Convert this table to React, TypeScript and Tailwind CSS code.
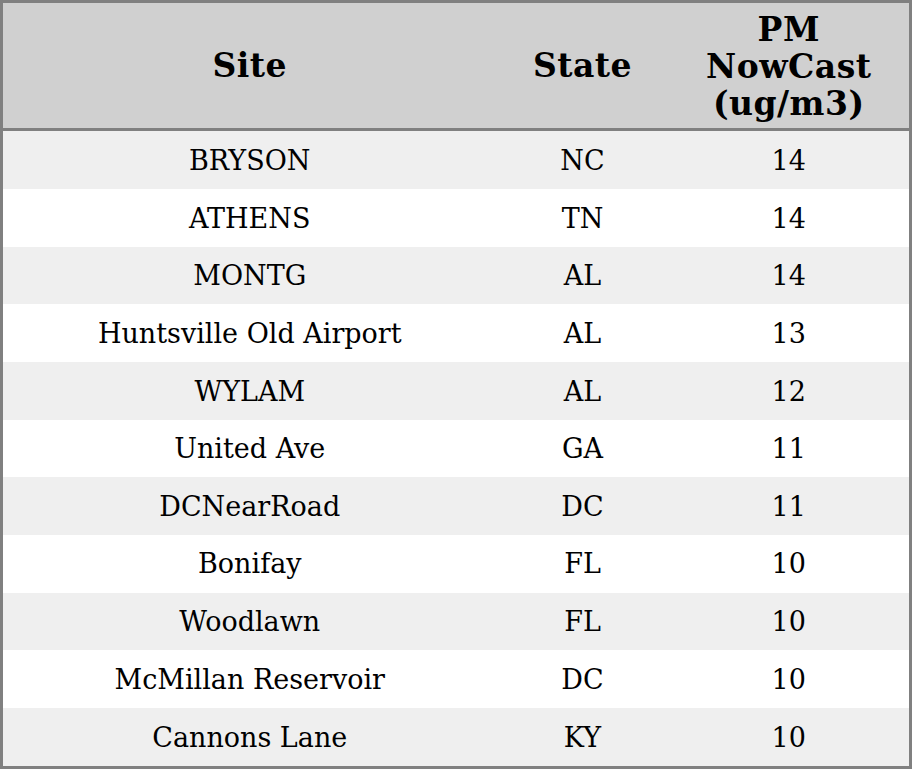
const rows: [string, string, number][] = [
  ["BRYSON", "NC", 14],
  ["ATHENS", "TN", 14],
  ["MONTG", "AL", 14],
  ["Huntsville Old Airport", "AL", 13],
  ["WYLAM", "AL", 12],
  ["United Ave", "GA", 11],
  ["DCNearRoad", "DC", 11],
  ["Bonifay", "FL", 10],
  ["Woodlawn", "FL", 10],
  ["McMillan Reservoir", "DC", 10],
  ["Cannons Lane", "KY", 10],
];

export default function App() {
  return (
    <div className="w-[912px] h-[769px] bg-white" style={{ fontFamily: '"DejaVu Serif", serif' }}>
      <table className="w-full h-full border-collapse border-[3px] border-[#808080] table-fixed text-black">
        <colgroup>
          <col className="w-[495px]" />
          <col className="w-[172px]" />
          <col />
        </colgroup>
        <thead>
          <tr className="bg-[#d0d0d0] h-[128px] border-b-[3px] border-[#808080]">
            <th className="text-[33px] font-bold leading-[37px] tracking-[0.5px] text-center align-middle">Site</th>
            <th className="text-[33px] font-bold leading-[37px] tracking-[0.5px] text-center align-middle">State</th>
            <th className="text-[33px] font-bold leading-[37px] tracking-[0.5px] text-center align-middle pt-[2px]">
              PM
              <br />
              NowCast
              <br />
              (ug/m3)
            </th>
          </tr>
        </thead>
        <tbody>
          {rows.map(([site, state, pm], i) => (
            <tr key={site} className={i % 2 === 0 ? "bg-[#efefef]" : "bg-white"}>
              <td className="text-[27px] text-center align-middle pt-[2px]">{site}</td>
              <td className="text-[27px] text-center align-middle pt-[2px]">{state}</td>
              <td className="text-[27px] text-center align-middle pt-[2px]">{pm}</td>
            </tr>
          ))}
        </tbody>
      </table>
    </div>
  );
}
